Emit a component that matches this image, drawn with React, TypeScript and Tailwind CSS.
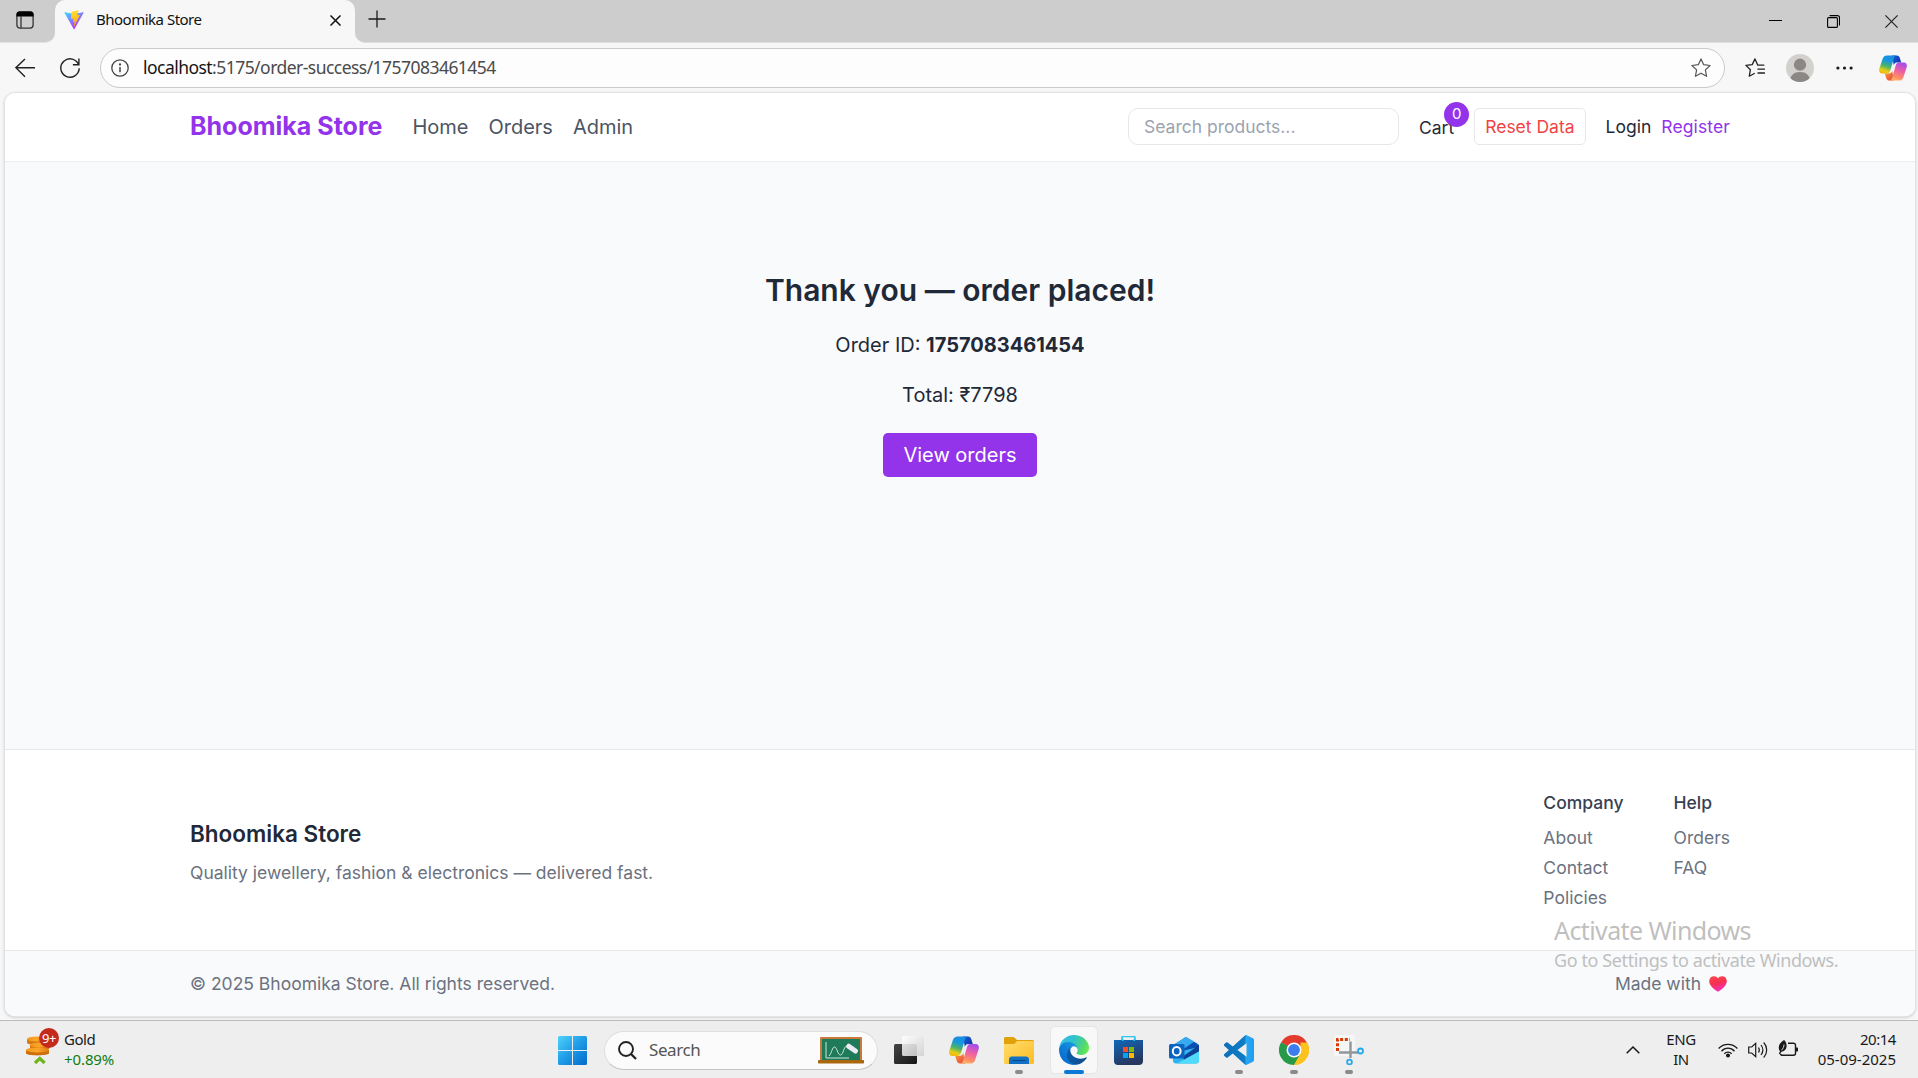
import type { ReactNode } from "react";

function Defs() {
  return (
    <svg width="0" height="0" className="absolute">
      <defs>
        <linearGradient id="viteA" x1="0" y1="0.1" x2="0.6" y2="0.9">
          <stop stopColor="#41d1ff" />
          <stop offset="1" stopColor="#bd34fe" />
        </linearGradient>
        <linearGradient id="viteB" x1="0.4" y1="0" x2="0.6" y2="0.9">
          <stop stopColor="#ffea83" />
          <stop offset="0.1" stopColor="#ffdd35" />
          <stop offset="1" stopColor="#ffa800" />
        </linearGradient>
        <linearGradient id="copA" x1="0.6" y1="0" x2="0.3" y2="1">
          <stop stopColor="#1a8ce0" />
          <stop offset="0.3" stopColor="#1696e0" />
          <stop offset="0.6" stopColor="#4bb36a" />
          <stop offset="0.85" stopColor="#e6cf14" />
          <stop offset="1" stopColor="#f5b60c" />
        </linearGradient>
        <linearGradient id="copB" x1="0.7" y1="0" x2="0.4" y2="1">
          <stop stopColor="#a24df0" />
          <stop offset="0.45" stopColor="#ee5fa6" />
          <stop offset="0.8" stopColor="#fd8a6a" />
          <stop offset="1" stopColor="#fdb163" />
        </linearGradient>
        <linearGradient id="copC" x1="0" y1="0" x2="1" y2="1">
          <stop stopColor="#1b5fd8" />
          <stop offset="1" stopColor="#0a2fa8" />
        </linearGradient>
        <linearGradient id="copD" x1="0" y1="0" x2="1" y2="1">
          <stop stopColor="#f8a13a" />
          <stop offset="1" stopColor="#e8403c" />
        </linearGradient>
        <linearGradient id="win" x1="0" y1="0" x2="1" y2="1">
          <stop stopColor="#4fd3fb" />
          <stop offset="0.5" stopColor="#1e9be6" />
          <stop offset="1" stopColor="#0569cc" />
        </linearGradient>
        <linearGradient id="edgeA" x1="0.2" y1="0.5" x2="1" y2="0.5">
          <stop stopColor="#0c59a4" />
          <stop offset="1" stopColor="#114a8b" />
        </linearGradient>
        <linearGradient id="edgeB" x1="0.9" y1="0.1" x2="0.2" y2="0.9">
          <stop stopColor="#1b9de2" />
          <stop offset="0.5" stopColor="#0f7fd8" />
          <stop offset="1" stopColor="#0a6bd0" />
        </linearGradient>
        <linearGradient id="edgeC" x1="0" y1="0.3" x2="1" y2="0.6">
          <stop stopColor="#35b9e9" />
          <stop offset="0.45" stopColor="#30c3c9" />
          <stop offset="0.8" stopColor="#52d676" />
          <stop offset="1" stopColor="#66eb4e" />
        </linearGradient>
        <linearGradient id="fold" x1="0" y1="0" x2="1" y2="1">
          <stop stopColor="#ffdd6d" />
          <stop offset="1" stopColor="#fcbc24" />
        </linearGradient>
        <linearGradient id="store" x1="0" y1="0" x2="0.4" y2="1">
          <stop stopColor="#0f68ba" />
          <stop offset="1" stopColor="#27375f" />
        </linearGradient>
        <linearGradient id="vsc" x1="0" y1="0" x2="1" y2="0">
          <stop stopColor="#0b6fb8" />
          <stop offset="0.68" stopColor="#0f7cc6" />
          <stop offset="0.74" stopColor="#2aa7f2" />
          <stop offset="1" stopColor="#1f9cf0" />
        </linearGradient>
        <linearGradient id="tvA" x1="0" y1="0" x2="1" y2="1">
          <stop stopColor="#454545" />
          <stop offset="1" stopColor="#161616" />
        </linearGradient>
        <linearGradient id="tvB" x1="0" y1="0" x2="1" y2="1">
          <stop stopColor="#ffffff" />
          <stop offset="1" stopColor="#d0d0d0" />
        </linearGradient>
        <linearGradient id="heart" x1="0" y1="0" x2="0.3" y2="1">
          <stop stopColor="#fb4a4f" />
          <stop offset="0.5" stopColor="#f8304f" />
          <stop offset="1" stopColor="#f52fb0" />
        </linearGradient>
        <linearGradient id="coin" x1="0" y1="0" x2="1" y2="0">
          <stop stopColor="#f39a1c" />
          <stop offset="0.5" stopColor="#fba52a" />
          <stop offset="1" stopColor="#e07d10" />
        </linearGradient>
      </defs>
    </svg>
  );
}

function Copilot({ size }: { size: number }) {
  return (
    <svg width={size} height={size} viewBox="0 0 30 30" className="shrink-0">
      <path d="M14 1.5h5c2 0 2.8 1 3.4 3l1.4 4.6h-4.2c-2 0-3 .6-3.8 2.9z" fill="url(#copC)" />
      <path d="M16 28.5h-5c-2 0-2.8-1-3.4-3l-1.4-4.6h4.2c2 0 3-.6 3.8-2.9z" fill="url(#copD)" />
      <path d="M8.6 1.5H19c-1.700 0-2.500 1.100-3 2.800l-3.800 13c-.7 2.500-1.800 3.600-4 3.600H3.400C.6 20.900-.3 18.500.3 15.900L3.900 5.100C4.700 2.700 6.200 1.500 8.600 1.500z" fill="url(#copA)" />
      <path d="M21.400 28.500H11c1.700 0 2.500-1.100 3-2.800l3.800-13c.7-2.500 1.800-3.600 4-3.600h4.800c2.800 0 3.700 2.400 3.100 5l-3.600 10.800c-.8 2.400-2.300 3.600-4.700 3.600z" fill="url(#copB)" />
    </svg>
  );
}

function TabStrip() {
  return (
    <div className="flex h-[43px] shrink-0">
      <div className="w-[55px] rounded-br-[10px] border-b border-[#e4e4e4] bg-[#cdcdcd] pt-[11px] pl-4">
        <svg width="18" height="18" viewBox="0 0 18 18" fill="none">
          <rect x="0.900" y="0.900" width="16.200" height="16.200" rx="3" stroke="#333" strokeWidth="1.300" />
          <path d="M.5 5.500V3.500a3 3 0 0 1 3-3h11a3 3 0 0 1 3 3v2z" fill="#000" />
          <path d="M5 5v12" stroke="#333" strokeWidth="1.300" />
        </svg>
      </div>
      <div className="w-[300px] bg-[#cdcdcd]">
        <div className="flex h-full items-center rounded-t-[10px] bg-[#f7f7f7] pr-[14px] pb-1 pl-[9px]">
          <svg width="20" height="20" viewBox="0 0 410 404">
            <path d="M399.641 59.5246L215.643 388.545C211.844 395.338 202.084 395.378 198.228 388.618L10.5817 59.5563C6.38087 52.1896 12.6802 43.2665 21.0281 44.7586L205.223 77.6824C206.398 77.8924 207.601 77.8904 208.776 77.6763L389.119 44.8058C397.439 43.2894 403.768 52.1434 399.641 59.5246Z" fill="url(#viteA)" />
            <path d="M292.965 1.5744L156.801 28.2552C154.563 28.6937 152.906 30.5903 152.771 32.8664L144.395 174.33C144.198 177.662 147.258 180.248 150.51 179.498L188.42 170.749C191.967 169.931 195.172 173.055 194.443 176.622L183.18 231.775C182.422 235.487 185.907 238.661 189.532 237.56L212.947 230.446C216.577 229.344 220.065 232.527 219.297 236.242L201.398 322.875C200.278 328.294 207.486 331.249 210.492 326.603L212.5 323.5L323.454 102.072C325.312 98.3645 322.108 94.137 318.036 94.9228L279.014 102.454C275.347 103.161 272.227 99.746 273.262 96.1583L298.731 7.86689C299.767 4.27314 296.636 0.855181 292.965 1.5744Z" fill="url(#viteB)" />
          </svg>
          <span className="ml-3 grow text-[15px] tracking-[-0.5px] text-[#111]">Bhoomika Store</span>
          <svg width="11" height="11" viewBox="0 0 11 11" stroke="#111" strokeWidth="1.500" className="mt-[2px]">
            <path d="M.5.500l10 10M10.500.500l-10 10" />
          </svg>
        </div>
      </div>
      <div className="flex grow items-start rounded-bl-[10px] border-b border-[#dedede] bg-[#cdcdcd] pr-5 pl-[13px]">
        <svg width="18" height="18" viewBox="0 0 18 18" stroke="#1a1a1a" strokeWidth="1.300" className="mt-[10px]">
          <path d="M9 .500v17M.5 9h17" />
        </svg>
        <div className="ml-auto flex gap-[45px] pt-[15px]">
          <svg width="13" height="13" viewBox="0 0 13 13" stroke="#000">
            <path d="M0 5.500h13" />
          </svg>
          <svg width="13" height="13" viewBox="0 0 13 13" stroke="#000" fill="none" strokeWidth="1.100">
            <rect x=".6" y="2.600" width="9.800" height="9.800" rx="1" />
            <path d="M2.600.6h7.900a2 2 0 0 1 2 2v7.900" />
          </svg>
          <svg width="13" height="13" viewBox="0 0 13 13" stroke="#222" strokeWidth="1.200">
            <path d="M.4.400l12.200 12.200M12.600.400L.4 12.600" />
          </svg>
        </div>
      </div>
    </div>
  );
}

function Toolbar() {
  return (
    <div className="flex h-[49px] shrink-0 items-center pt-px pr-[11px] pl-[15px]">
      <svg width="20" height="20" viewBox="0 0 20 20" fill="none" stroke="#222" strokeWidth="1.400">
        <path d="M20 9.700H.800M10 .900L.9 9.700l9.100 9.100" />
      </svg>
      <svg width="20" height="20" viewBox="0 0 20 20" fill="none" stroke="#222" strokeWidth="1.400" className="ml-[25px]">
        <path d="M18.700 7A9.200 9.200 0 1 0 19.200 10.300M18.900.500v6.200h-6" />
      </svg>
      <div className="ml-5 flex h-10 w-[1625px] items-center rounded-full border border-[#cacaca] bg-[#fdfdfd] pr-[13px] pl-[10px]">
        <svg width="18" height="18" viewBox="0 0 18 18" fill="none" stroke="#444" strokeWidth="1.300">
          <circle cx="9" cy="9" r="8.200" />
          <path d="M9 8v5.200" strokeWidth="1.500" />
          <circle cx="9" cy="5.500" r=".5" fill="#444" />
        </svg>
        <span className="mb-px ml-[14px] grow text-[17.5px] tracking-[-0.54px] text-[#4a4a4a]">
          <span className="text-[#141414]">localhost</span>:5175/order-success/1757083461454
        </span>
        <svg width="20" height="20" viewBox="0 0 20 20" fill="none" stroke="#555" strokeWidth="1.200" strokeLinejoin="round">
          <path d="M10 .9l2.700 5.800 6.400.8-4.700 4.400 1.200 6.400L10 15.200l-5.600 3.100 1.200-6.400L.9 7.500l6.400-.8z" />
        </svg>
      </div>
      <svg width="20" height="20" viewBox="0 0 20 20" fill="none" stroke="#222" strokeWidth="1.300" strokeLinejoin="round" strokeLinecap="round" className="ml-5">
        <path d="M18.800 7.200h-6L10 .900 7.200 6.600l-6.300.8 4.500 4.300-1.100 6.500 5-2.700M13 11.200h6.500M13 15h6.500" />
      </svg>
      <svg width="28" height="28" viewBox="0 0 28 28" className="ml-[21px]">
        <clipPath id="av"><circle cx="14" cy="14" r="14" /></clipPath>
        <circle cx="14" cy="14" r="14" fill="#d3d1ce" />
        <circle cx="14" cy="10.700" r="6.100" fill="#8b8785" />
        <path d="M4 28c0-7 4-10 10-10s10 3 10 10z" fill="#8b8785" clipPath="url(#av)" />
      </svg>
      <svg width="17" height="4" viewBox="0 0 17 4" className="ml-[22px]" fill="#1a1a1a">
        <circle cx="1.900" cy="2" r="1.600" />
        <circle cx="8.500" cy="2" r="1.600" />
        <circle cx="15.100" cy="2" r="1.600" />
      </svg>
      <div className="ml-auto"><Copilot size={28} /></div>
    </div>
  );
}

function Header() {
  return (
    <header className="h-[69px] shrink-0 border-b border-[#eceef1] bg-white pb-px">
      <div className="mx-auto flex h-full w-[1540px] items-center text-[17.5px] text-[#1f2937]">
        <span className="text-[25px] font-bold text-[#9333ea]">Bhoomika Store</span>
        <nav className="ml-[30px] flex gap-5 text-[20px] text-[#4b5563]">
          <a>Home</a>
          <a>Orders</a>
          <a>Admin</a>
        </nav>
        <div className="ml-auto flex items-center gap-5">
          <div className="flex h-[37px] w-[271px] items-center rounded-[10px] border border-[#e5e7eb] px-[15px] pt-px text-[#9ca3af]">Search products...</div>
          <div className="relative pt-[3px]">
            Cart
            <span className="absolute -top-[10px] -right-[15px] flex size-[25px] items-center justify-center rounded-full bg-[#9333ea] text-[15px] text-white">0</span>
          </div>
          <div className="flex h-[37px] items-center rounded-[5px] border border-[#e5e7eb] px-[10px] pt-px text-[#ef4444]">Reset Data</div>
          <div className="flex gap-[10px] pt-px">
            <a>Login</a>
            <a className="tracking-[0.12px] text-[#9333ea]">Register</a>
          </div>
        </div>
      </div>
    </header>
  );
}

function FooterColumn({ title, links }: { title: string; links: string[] }) {
  return (
    <div>
      <div className="font-medium text-[#374151]">{title}</div>
      <ul className="mt-[10px] flex flex-col gap-[5px]">
        {links.map((l) => <li key={l}>{l}</li>)}
      </ul>
    </div>
  );
}

function Page() {
  return (
    <div className="relative mx-[4px] flex h-[925px] w-[1912px] shrink-0 flex-col overflow-hidden rounded-[11px] border border-[#e2e2e2] bg-[#f9fafb] font-[Inter,sans-serif] shadow-[0_1px_3px_rgba(0,0,0,0.15)]">
      <Header />
      <main className="flex grow flex-col items-center pt-[108px] text-[20px] leading-[30px] text-[#1f2937]">
        <h2 className="text-[30px] leading-10 font-semibold">Thank you — order placed!</h2>
        <p className="mt-5">Order ID: <strong className="font-bold">1757083461454</strong></p>
        <p className="mt-5">Total: ₹7798</p>
        <a className="mt-[23px] flex h-11 w-[154px] items-center justify-center rounded-[5px] bg-[#9333ea] text-white">View orders</a>
      </main>
      <footer className="shrink-0 border-t border-[#e5e7eb] bg-white text-[17.5px] leading-[25px] text-[#6b7280]">
        <div className="mx-auto flex w-[1540px] items-center justify-between py-10">
          <div>
            <div className="pt-px text-[22.5px] leading-[35px] font-semibold text-[#1f2937]">Bhoomika Store</div>
            <p className="mt-[9px]">Quality jewellery, fashion &amp; electronics — delivered fast.</p>
          </div>
          <div className="flex gap-[50px]">
            <FooterColumn title="Company" links={["About", "Contact", "Policies"]} />
            <FooterColumn title="Help" links={["Orders", "FAQ"]} />
          </div>
        </div>
        <div className="border-t border-[#e5e7eb] bg-[#f9fafb]">
          <div className="mx-auto flex h-[65px] w-[1540px] items-center justify-between">
            <span>© 2025 Bhoomika Store. All rights reserved.</span>
            <span className="flex items-center gap-2 pr-[3px]">
              Made with
              <svg width="18" height="16" viewBox="0 0 18 16">
                <path d="M9 15.800C5 13 .2 9.600.2 5.200.2 2.300 2.200.3 4.900.3 6.700.3 8.200 1.100 9 2.600 9.800 1.100 11.300.3 13.100.3c2.700 0 4.700 2 4.700 4.900 0 4.400-4.800 7.800-8.800 10.600z" fill="url(#heart)" />
              </svg>
            </span>
          </div>
        </div>
      </footer>
      <div className="absolute top-[820px] left-[1549px] flex flex-col font-['Noto_Sans',sans-serif] whitespace-nowrap text-[#bfbfbf]">
        <span className="text-[25px] leading-[34px] tracking-[-0.6px]">Activate Windows</span>
        <span className="text-[18px] leading-[26px] tracking-[-0.4px]">Go to Settings to activate Windows.</span>
      </div>
    </div>
  );
}

function Cell({ children, mark }: { children: ReactNode; mark?: boolean }) {
  return (
    <div className="relative flex h-12 w-[55px] items-center justify-center">
      {children}
      {mark && <span className="absolute bottom-0 h-1 w-2 rounded-full bg-[#8a8a8a]" />}
    </div>
  );
}

function Taskbar() {
  return (
    <div className="flex h-[58px] shrink-0 items-center border-t border-[#bcbcbc] bg-[#eeeeee] pt-px pr-[22px] pl-[26px] text-[15px] leading-5 tracking-[-0.45px] text-[#1a1a1a]">
      <div className="flex w-[519px] items-center">
        <div className="relative h-9 w-[38px]">
          <svg width="34" height="30" viewBox="0 0 34 30" className="mt-1">
            <path d="M1 3v4c2 2.500 17 2.500 19 0V3z" fill="#d9780f" />
            <ellipse cx="10.500" cy="3" rx="9.500" ry="2.500" fill="url(#coin)" />
            <path d="M4 9v3.500c2 2.500 17 2.500 19.500 0V9z" fill="#d9780f" />
            <ellipse cx="14" cy="9" rx="9.700" ry="2.500" fill="url(#coin)" />
            <path d="M0 14v3.500c2 2.500 20 2.500 23 0V14z" fill="#cf6f0c" />
            <ellipse cx="11.500" cy="14" rx="11.500" ry="2.600" fill="url(#coin)" />
            <path d="M9 27l4.800-4.600L18.600 27" fill="none" stroke="#6db51b" strokeWidth="3.200" />
          </svg>
          <span className="absolute -top-[4px] left-[13px] flex size-5 items-center justify-center rounded-full bg-[#c42b1c] text-[13px] text-white">9+</span>
        </div>
        <div className="mb-[3px]">
          <div>Gold</div>
          <div className="tracking-[-0.1px] text-[#107c10]">+0.89%</div>
        </div>
      </div>
      <Cell>
        <svg width="29" height="29" viewBox="0 0 29 29">
          <path d="M1.500 0H14v14H0V1.500A1.500 1.500 0 0 1 1.500 0zM15 0h12.500A1.500 1.500 0 0 1 29 1.500V14H15zM0 15h14v14H1.500A1.500 1.500 0 0 1 0 27.500zM15 15h14v12.500a1.500 1.500 0 0 1-1.500 1.500H15z" fill="url(#win)" />
        </svg>
      </Cell>
      <div className="ml-1 flex h-[39px] w-[274px] items-center rounded-full border border-[#dedede] border-b-[#c4c4c4] bg-[#fbfbfb] pr-[13px] pl-[13px]">
        <svg width="19" height="19" viewBox="0 0 19 19" fill="none" stroke="#222" strokeWidth="1.900">
          <circle cx="8" cy="8" r="7" />
          <path d="M13 13l5 5" strokeWidth="2.300" />
        </svg>
        <span className="ml-[12px] grow text-[17px] tracking-[-0.4px] text-[#555]">Search</span>
        <svg width="46" height="27" viewBox="0 0 46 27">
          <rect x="2" width="42" height="24" rx="1" fill="#c9793a" />
          <rect x="4" y="2" width="38" height="21" fill="#1f7a5a" />
          <path d="M8 5v16h23M11 19c3-3 3-9 5.500-9s3 8 6 8 3-9 6.500-9" fill="none" stroke="#cfe8de" strokeWidth="1" />
          <rect x="28" y="9" width="13" height="5" rx="2" fill="#eceaf2" transform="rotate(35 34 11)" />
          <rect y="23" width="46" height="3.500" rx=".8" fill="#a9670f" />
        </svg>
      </div>
      <div className="ml-[3px] flex">
        <Cell>
          <svg width="30" height="28" viewBox="0 0 30 28">
            <rect y="8" width="23" height="20" rx="1.500" fill="url(#tvA)" />
            <rect x="8" width="22" height="20" rx="1.500" fill="url(#tvB)" fillOpacity=".88" />
          </svg>
        </Cell>
        <Cell><Copilot size={30} /></Cell>
        <Cell mark>
          <svg width="30" height="27" viewBox="0 0 30 27">
            <path d="M0 1.500C0 .7.700 0 1.500 0h7.300c.8 0 1.300.3 1.800.8L13 3h15.500c.8 0 1.500.7 1.500 1.500V10H0z" fill="#e0a10a" />
            <path d="M0 7h9.500c.8 0 1.200-.3 1.700-.8L13 4h15.500c.8 0 1.500.7 1.500 1.500v20c0 .8-.7 1.500-1.500 1.500h-27C.7 27 0 26.300 0 25.500z" fill="url(#fold)" />
            <path d="M5 27v-4.500c0-1.900 1.200-3 3-3h14c1.800 0 3 1.100 3 3V27z" fill="#0f70c4" />
            <path d="M9 23.500h12" stroke="#08468a" strokeWidth="1.200" strokeLinecap="round" />
          </svg>
        </Cell>
        <div className="relative flex h-12 w-[55px] justify-center">
          <div className="flex h-full w-12 items-center justify-center rounded-[5px] border border-[#e6e6e6] bg-[#f8f8f8]">
            <svg width="30" height="30" viewBox="0 0 256 256">
              <path d="M231 190.500c-3.400 1.800-6.900 3.400-10.500 4.700a101.200 101.200 0 0 1-35.900 6.500c-47.300 0-88.500-32.500-88.500-74.300a31.500 31.500 0 0 1 16.400-27.300c-42.800 1.800-53.800 46.400-53.800 72.500 0 74 68.100 81.400 82.800 81.400 7.900 0 19.800-2.300 27-4.600l1.300-.4a128.300 128.300 0 0 0 66.600-52.800 4 4 0 0 0-5.400-5.700z" fill="url(#edgeA)" />
              <path d="M105.700 241.400a79.200 79.200 0 0 1-22.700-21.300 80.700 80.700 0 0 1 29.500-120c3.200-1.500 8.500-4.100 15.600-4a32.400 32.400 0 0 1 25.700 13 31.900 31.900 0 0 1 6.300 18.700c0-.2 24.500-79.600-80-79.600-43.900 0-80 41.600-80 78.200a130.200 130.200 0 0 0 12.100 56 128 128 0 0 0 156.400 67 75.500 75.500 0 0 1-62.800-8z" fill="url(#edgeB)" />
              <path d="M152.300 148.900c-.8 1-3.300 2.500-3.300 5.700 0 2.600 1.700 5.100 4.700 7.200 14.400 10 41.500 8.700 41.600 8.700a59.600 59.600 0 0 0 30.300-8.300 61.400 61.400 0 0 0 30.400-52.900c.3-22.400-8-37.300-11.300-43.900C223.500 23.900 177.700 0 128 0A128 128 0 0 0 0 126.200c.5-36.500 36.800-66 80-66 3.500 0 23.500.3 42 10.100 16.300 8.600 24.900 18.900 30.800 29.200 6.200 10.700 7.300 24.100 7.300 29.500s-2.700 13.300-7.800 19.900z" fill="url(#edgeC)" />
            </svg>
          </div>
          <span className="absolute bottom-0 h-1 w-5 rounded-full bg-[#0a78d4]" />
        </div>
        <Cell>
          <svg width="29" height="29" viewBox="0 0 29 29">
            <path d="M8 5V2c0-1 .6-1.500 1.500-1.500h10c.9 0 1.500.5 1.500 1.500v3" fill="none" stroke="#2cc3f2" strokeWidth="1.700" />
            <path d="M0 4h29v21c0 2.500-1.500 4-4 4H4c-2.500 0-4-1.500-4-4z" fill="url(#store)" />
            <path d="M8 5V3h1.500v2zM19.500 5V3H21v2z" fill="#2cc3f2" />
            <path d="M9 11h5v5H9z" fill="#f25022" />
            <path d="M15 11h5v5h-5z" fill="#7fba00" />
            <path d="M9 17h5v5H9z" fill="#00a4ef" />
            <path d="M15 17h5v5h-5z" fill="#ffb900" />
          </svg>
        </Cell>
        <Cell>
          <svg width="30" height="27" viewBox="0 0 30 27">
            <path d="M5 7.500L15.500.800c.9-.6 1.900-.6 2.800 0L29 7l-13 9-11-4z" fill="#1490df" />
            <path d="M9 5L15.500.800c.9-.6 1.900-.6 2.800 0L25 4.600 14 12l-9-4.500z" fill="#37a9ee" />
            <path d="M14 12.500L25 5l5 3v2L16 19z" fill="#0b50b0" />
            <path d="M4 16l26-6v13.500c0 2-1 3-3 3H7c-2 0-3-1-3-3z" fill="#2db4ee" />
            <path d="M14 19.500L30 8v6.500L15 23z" fill="#0f3f94" />
            <path d="M8 26.500L30 14.500v9c0 2-1 3-3 3z" fill="#51daf9" />
            <rect y="7" width="15.500" height="14.500" rx="1.500" fill="#0a64c0" />
            <ellipse cx="7.700" cy="14.200" rx="3.900" ry="4.200" fill="none" stroke="#fff" strokeWidth="2" />
          </svg>
        </Cell>
        <Cell mark>
          <svg width="30" height="30" viewBox="0 0 24 24">
            <path d="M23.150 2.587L18.210.210a1.494 1.494 0 0 0-1.705.290l-9.460 8.630-4.120-3.128a.999.999 0 0 0-1.276.057L.327 7.261A1 1 0 0 0 .326 8.740L3.899 12 .326 15.260a1 1 0 0 0 .001 1.479L1.650 17.940a.999.999 0 0 0 1.276.057l4.120-3.128 9.460 8.630a1.492 1.492 0 0 0 1.704.290l4.942-2.377A1.500 1.500 0 0 0 24 20.060V3.939a1.500 1.500 0 0 0-.850-1.352zm-5.146 14.861L10.826 12l7.178-5.448v10.896z" fill="url(#vsc)" />
          </svg>
        </Cell>
        <Cell mark>
          <svg width="30" height="30" viewBox="0 0 48 48">
            <path d="M24 24L3.200 12A24 24 0 0 1 44.800 12z" fill="#e33b2e" />
            <path d="M24 24L44.800 12A24 24 0 0 1 24 48z" fill="#fcc31e" />
            <path d="M24 24v24A24 24 0 0 1 3.200 12z" fill="#269a48" />
            <path d="M24 12h20.800L24 24z" fill="#e33b2e" />
            <path d="M13.600 30L3.200 12 24 24z" fill="#269a48" />
            <path d="M13.600 30L24 48l10.400-18z" fill="#269a48" />
            <path d="M24 48l10.400-18V12h10.400A24 24 0 0 1 24 48z" fill="#fcc31e" />
            <circle cx="24" cy="24" r="12" fill="#fff" />
            <circle cx="24" cy="24" r="9.500" fill="#3b7ded" />
          </svg>
        </Cell>
        <Cell mark>
          <svg width="30" height="30" viewBox="0 0 30 30" fill="none">
            <rect x="0" y="0" width="21" height="21" rx="2" fill="#f6f6f6" />
            <path d="M3.500 16V4.500H16" stroke="#d83b01" strokeWidth="3" strokeDasharray="3 1.700" />
            <path d="M16.500 6.500V23M5 17.500h19" stroke="#8f969c" strokeWidth="2.400" />
            <circle cx="26.500" cy="16" r="2.500" stroke="#28a8ea" strokeWidth="1.800" />
            <circle cx="15.500" cy="27" r="2.400" stroke="#28a8ea" strokeWidth="1.800" />
          </svg>
        </Cell>
      </div>
      <div className="ml-auto flex items-center">
        <svg width="14" height="8" viewBox="0 0 14 8" fill="none" stroke="#1a1a1a" strokeWidth="1.500">
          <path d="M.7 7.300L7 1l6.300 6.300" />
        </svg>
        <div className="mb-[2px] ml-[25px] w-[32px] text-center whitespace-nowrap">ENG<br />IN</div>
        <svg width="20" height="16" viewBox="0 0 20 16" fill="none" stroke="#1a1a1a" strokeWidth="1.300" className="mb-px ml-[21px]">
          <path d="M.6 6.500c5.200-5.600 13.600-5.600 18.800 0M3.500 9.200c3.600-4 9.400-4 13 0M6.300 11.800c2-2.200 5.400-2.200 7.400 0" />
          <circle cx="10" cy="13.500" r="1.400" fill="#1a1a1a" />
        </svg>
        <svg width="20" height="18" viewBox="0 0 20 18" fill="none" stroke="#1a1a1a" strokeWidth="1.200" className="ml-[10px]">
          <path d="M.7 6v6h3l4 3.600V2.400L3.700 6zM10.500 6.500c1 1.500 1 3.500 0 5M13 4c2.300 3 2.300 7 0 10M15.700 1.500c4 4.500 4 10.500 0 15" />
        </svg>
        <svg width="20" height="17" viewBox="0 0 20 17" fill="none" stroke="#1a1a1a" strokeWidth="1.400" className="mb-[3px] ml-[10px]">
          <path d="M10 3.200h5.500a2 2 0 0 1 2 2v8a2 2 0 0 1-2 2H4.500c-1.300 0-2-.5-2-1.500" />
          <path d="M17.500 7.500h1.800q.7 0 .7.700v2.600q0 .7-.7.700h-1.800z" fill="#1a1a1a" stroke="none" />
          <path d="M6 0c2 1.500 3 4.500 2.500 7-.5 2.800-2.500 4.500-5 4.700l-1.700 2.600-1-.7 1.300-2.400C-.8 8 1 3 6 0z" fill="#1a1a1a" stroke="none" />
          <path d="M6 4.500c0 2-.8 4-2.500 5.800" stroke="#eee" strokeWidth=".9" />
        </svg>
        <div className="mb-[3px] ml-4 w-[82px] text-right whitespace-nowrap">20:14<br /><span className="tracking-[0px]">05-09-2025</span></div>
      </div>
    </div>
  );
}

export default function App() {
  return (
    <div className="flex h-[1078px] w-[1918px] flex-col overflow-hidden bg-[#f7f7f7] font-['Noto_Sans',sans-serif]">
      <Defs />
      <TabStrip />
      <Toolbar />
      <Page />
      <div className="h-[3px] shrink-0" />
      <Taskbar />
    </div>
  );
}
